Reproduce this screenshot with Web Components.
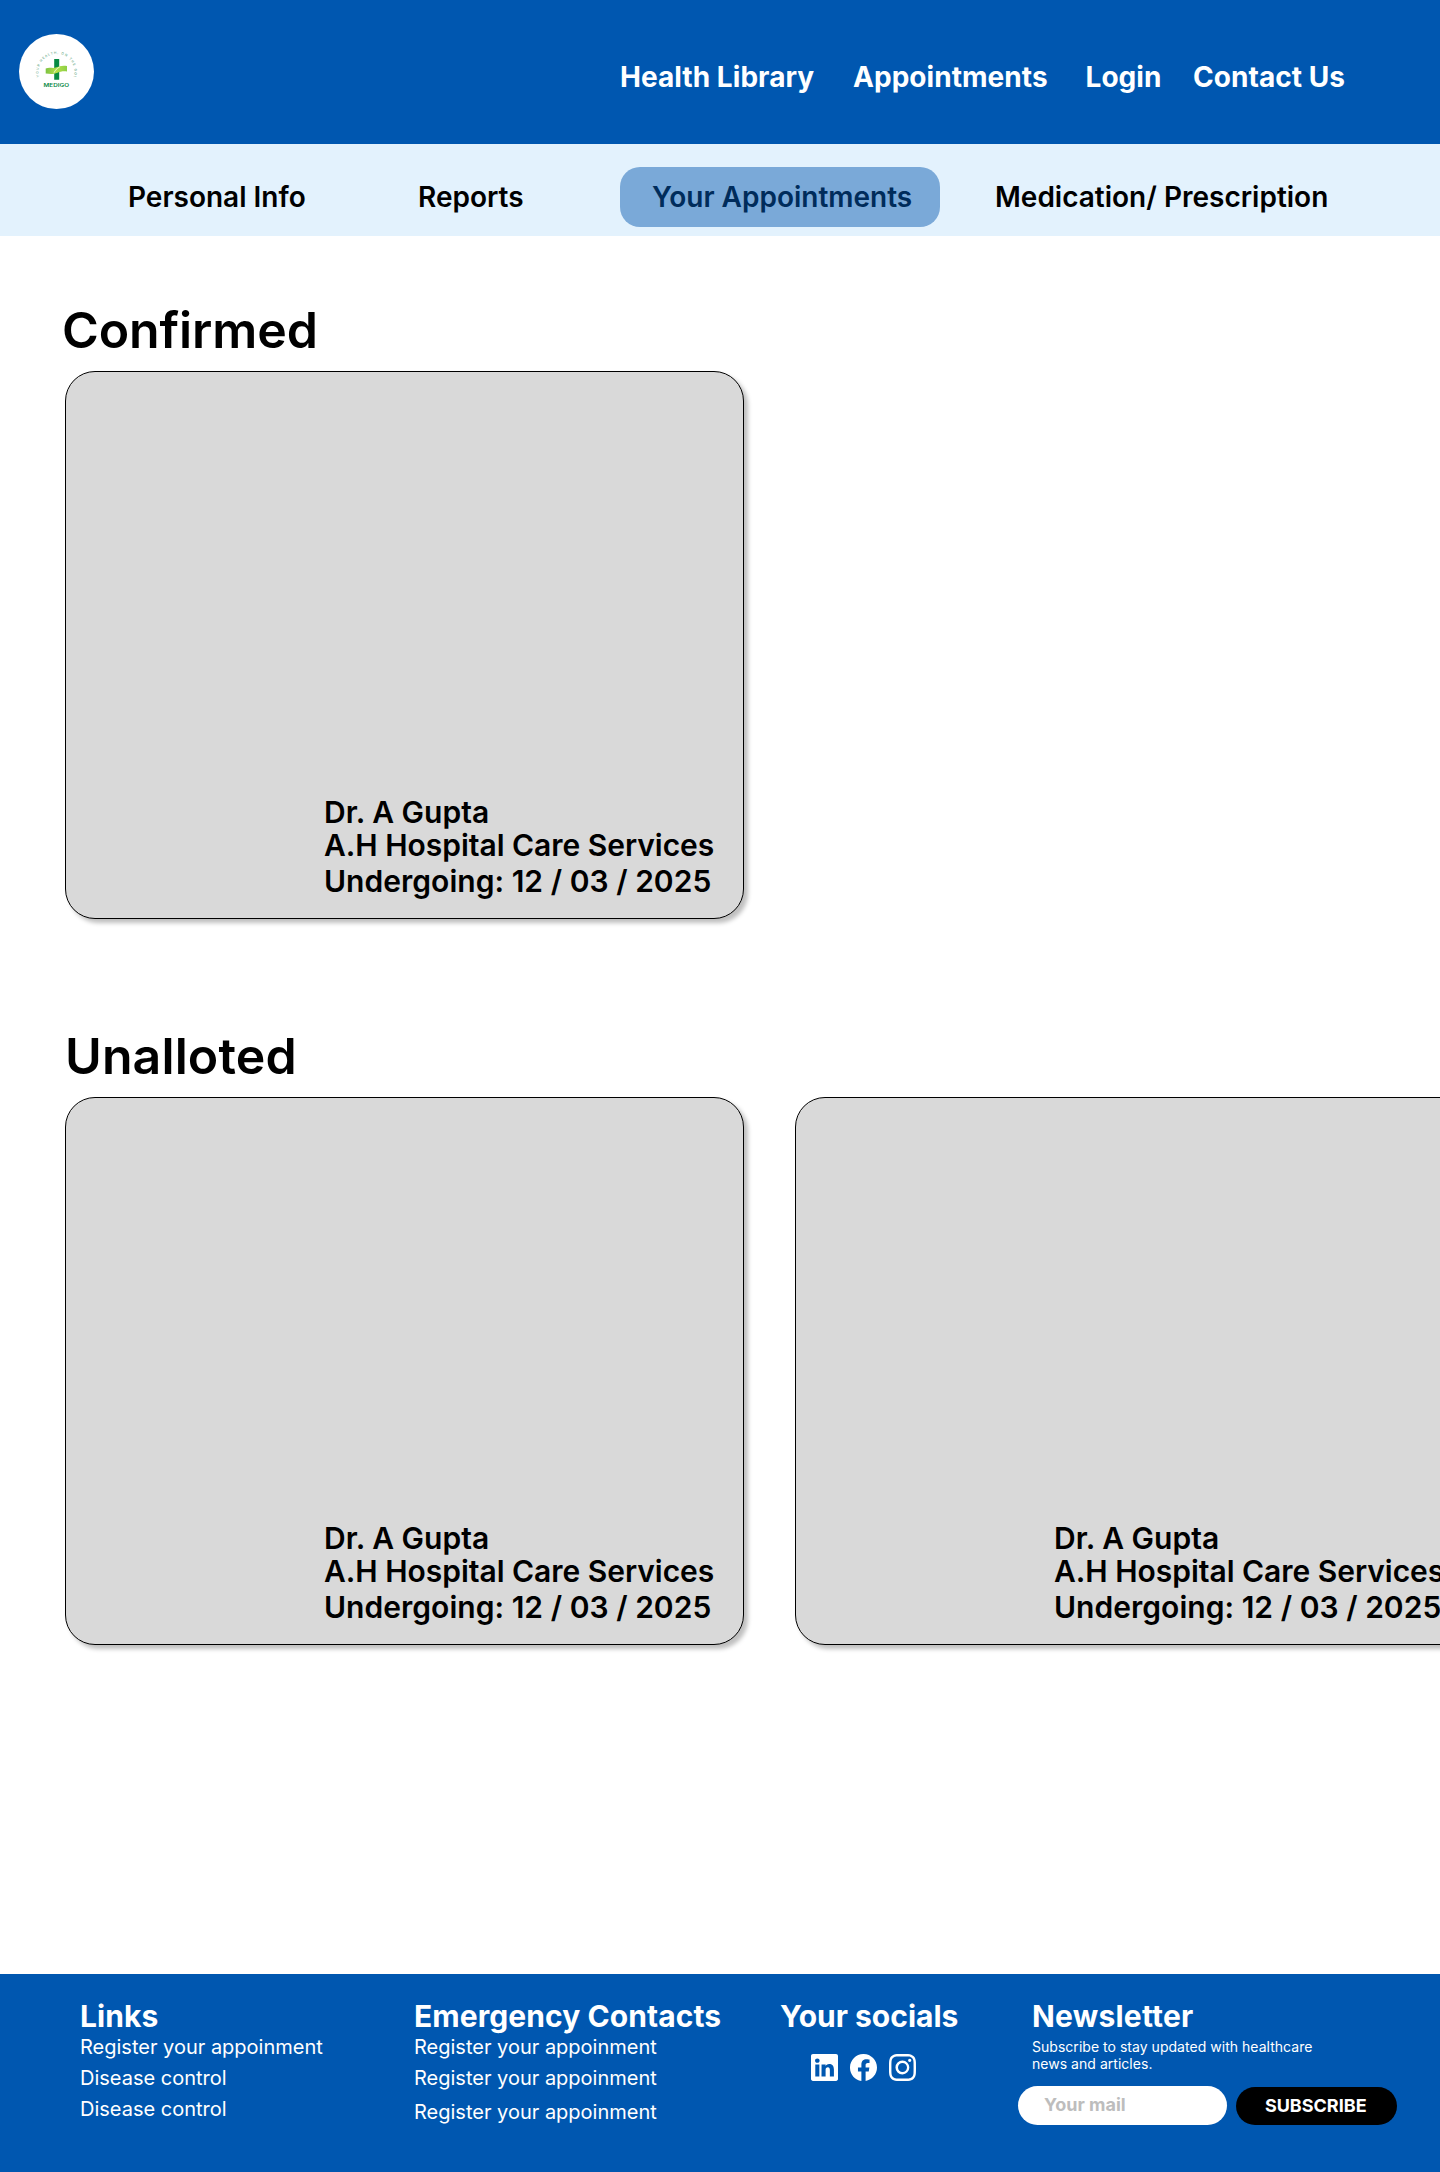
<!DOCTYPE html>
<html lang="en">
<head>
<meta charset="utf-8">
<title>Medigo – Your Appointments</title>
<style>
  body { margin: 0; background: #fff; font-family: Inter, "Liberation Sans", sans-serif; color: #000; }
</style>
</head>
<body>
<medigo-page></medigo-page>
<script>
const define = (name, html) => customElements.define(name, class extends HTMLElement {
  constructor() {
    super();
    const t = document.createElement('template');
    t.innerHTML = html;
    this.attachShadow({ mode: 'open' }).appendChild(t.content.cloneNode(true));
  }
});

define('medigo-logo', `
<style>
  :host { display: block; width: 75px; height: 75px; }
  svg { display: block; }
  text { font-family: Inter, sans-serif; }
</style>
<svg width="75" height="75" viewBox="0 0 75 75">
  <defs><path id="arc" d="M20.2 42.8 A18 18 0 1 1 54.8 42.8"/>
  <linearGradient id="lime" x1="0" x2="1"><stop offset="0" stop-color="#7cc242"/><stop offset=".5" stop-color="#b5e04a"/><stop offset="1" stop-color="#8ccf45"/></linearGradient></defs>
  <circle cx="37.5" cy="37.5" r="37.5" fill="#fff"/>
  <text font-size="3.300" font-weight="500" fill="#5fa885"><textPath href="#arc" textLength="66">YOUR HEALTH, ON THE GO!</textPath></text>
  <path d="M35.2 25h5v9h-5zM35.2 36.500h5v9.200h-5z" fill="#078a43"/>
  <path d="M26.7 34.400c4.300-1.600 6.800.300 10-.800 3.500-1.300 6.500-2.500 11.300-1.600v5.500c-4-.500-6.500.100-9.500 1.300-4.200 1.700-7.300 1.300-11.800.8z" fill="url(#lime)"/>
  <path d="M35 38.800c1.300-2.900 3-4.500 5.800-5.900" fill="none" stroke="#fff" stroke-width=".7"/>
  <text x="24.500" y="52.600" font-size="5.200" font-weight="600" fill="#0b8a48" textLength="25.500" lengthAdjust="spacingAndGlyphs">MEDIGO</text>
</svg>`);

define('top-bar', `
<style>
  :host { display: flex; align-items: flex-start; height: 144px; box-sizing: border-box; padding: 34px 0 0 19px; background: #0057b0; color: #fff; }
  nav { display: grid; grid-template-columns: 233px 232.500px 107.500px auto; margin: 26px 0 0 526px; font-size: 28px; line-height: 34px; font-weight: 700; letter-spacing: .05px; white-space: nowrap; }
</style>
<medigo-logo></medigo-logo>
<nav><slot></slot></nav>`);

define('tab-bar', `
<style>
  :host { display: grid; grid-template-columns: 290px 202px 320px auto; height: 92px; box-sizing: border-box; padding: 23px 0 0 128px; background: #e3f2fd; align-items: start; }
</style>
<slot></slot>`);

define('tab-item', `
<style>
  :host { display: flex; height: 60px; align-items: center; font-size: 28px; line-height: 34px; font-weight: 600; white-space: nowrap; }
  :host([active]) { width: 320px; box-sizing: border-box; padding-left: 32px; border-radius: 20px; background: #7aa9d8; color: #002c5b; }
  :host([last]) { padding-left: 55px; }
</style>
<slot></slot>`);

define('appointment-card', `
<style>
  :host { display: flex; flex-direction: column; justify-content: flex-end; flex: none; width: 679px; height: 548px; box-sizing: border-box; padding: 0 0 19px 258px; border: 1px solid #000; border-radius: 30px; background: #d9d9d9; box-shadow: 4px 4px 4px rgba(0,0,0,.25); font-size: 30px; line-height: 36px; font-weight: 600; white-space: nowrap; }
  div:nth-of-type(2) { margin-top: -3px; letter-spacing: -.03px; }
  div:nth-of-type(3) { letter-spacing: .03px; }
</style>
<div><slot name="doctor"></slot></div>
<div><slot name="place"></slot></div>
<div><slot name="date"></slot></div>`);

define('appointment-section', `
<style>
  :host { display: block; }
  h2 { margin: 0 0 11px; font-size: 50px; line-height: 60px; font-weight: 600; letter-spacing: .12px; }
  .row { display: flex; gap: 51px; }
</style>
<h2><slot name="title"></slot></h2>
<div class="row"><slot></slot></div>`);

define('footer-column', `
<style>
  :host { display: block; font-size: 20px; line-height: 24px; white-space: nowrap; }
  h3 { margin: 0 0 1px; font-size: 30px; line-height: 36px; font-weight: 700; letter-spacing: var(--title-spacing, .08px); }
</style>
<h3><slot name="title"></slot></h3>
<slot></slot>`);

define('footer-link', `
<style>:host { display: block; margin-bottom: 7px; }</style><slot></slot>`);

define('social-icons', `
<style>
  :host { display: flex; gap: 12px; padding: 19px 0 0 30.500px; }
  svg { width: 27px; height: 27px; fill: #fff; }
</style>
<svg viewBox="0 0 16 16"><path d="M0 1.146C0 .513.526 0 1.175 0h13.650C15.474 0 16 .513 16 1.146v13.708c0 .633-.526 1.146-1.175 1.146H1.175C.526 16 0 15.487 0 14.854V1.146zm4.943 12.248V6.169H2.542v7.225h2.401zm-1.200-8.212c.837 0 1.358-.554 1.358-1.248-.015-.709-.520-1.248-1.342-1.248-.822 0-1.359.540-1.359 1.248 0 .694.521 1.248 1.327 1.248h.016zm4.908 8.212V9.359c0-.216.016-.432.080-.586.173-.431.568-.878 1.232-.878.869 0 1.216.662 1.216 1.634v3.865h2.401V9.250c0-2.220-1.184-3.252-2.764-3.252-1.274 0-1.845.700-2.165 1.193V6.169h-2.400c.030.678 0 7.225 0 7.225h2.400z"/></svg>
<svg viewBox="0 0 16 16"><path d="M16 8.049c0-4.446-3.582-8.050-8-8.050C3.580 0-.002 3.603-.002 8.050c0 4.017 2.926 7.347 6.750 7.951v-5.625h-2.030V8.050H6.750V6.275c0-2.017 1.195-3.131 3.022-3.131.876 0 1.791.157 1.791.157v1.980h-1.009c-.993 0-1.303.621-1.303 1.258v1.510h2.218l-.354 2.326H9.250V16c3.824-.604 6.750-3.934 6.750-7.951z"/></svg>
<svg viewBox="0 0 16 16"><path d="M8 0C5.829 0 5.556.01 4.703.048 3.850.088 3.269.222 2.760.420a3.917 3.917 0 0 0-1.417.923A3.927 3.927 0 0 0 .420 2.760C.222 3.268.087 3.850.048 4.700.01 5.555 0 5.827 0 8.001c0 2.172.01 2.444.048 3.297.04.852.174 1.433.372 1.942.205.526.478.972.923 1.417.444.445.890.719 1.416.923.510.198 1.090.333 1.942.372C5.555 15.990 5.827 16 8 16s2.444-.01 3.298-.048c.851-.04 1.434-.174 1.943-.372a3.916 3.916 0 0 0 1.416-.923c.445-.445.718-.891.923-1.417.197-.509.332-1.090.372-1.942C15.990 10.445 16 10.173 16 8s-.01-2.445-.048-3.299c-.04-.851-.175-1.433-.372-1.941a3.926 3.926 0 0 0-.923-1.417A3.911 3.911 0 0 0 13.240.420c-.510-.198-1.092-.333-1.943-.372C10.443.01 10.172 0 7.998 0h.003zm-.717 1.442h.718c2.136 0 2.389.007 3.232.046.780.035 1.204.166 1.486.275.373.145.640.319.920.599.280.280.453.546.598.920.110.281.240.705.275 1.485.039.843.047 1.096.047 3.231s-.008 2.389-.047 3.232c-.035.780-.166 1.203-.275 1.485a2.470 2.470 0 0 1-.599.919c-.280.280-.546.453-.920.598-.280.110-.704.240-1.485.276-.843.038-1.096.047-3.232.047s-2.390-.009-3.233-.047c-.780-.036-1.203-.166-1.485-.276a2.478 2.478 0 0 1-.920-.598 2.480 2.480 0 0 1-.600-.920c-.109-.281-.240-.705-.275-1.485-.038-.843-.046-1.096-.046-3.233 0-2.136.008-2.388.046-3.231.036-.780.166-1.204.276-1.486.145-.373.319-.640.599-.920.280-.280.546-.453.920-.598.282-.110.705-.240 1.485-.276.738-.034 1.024-.044 2.515-.045v.002zm4.988 1.328a.960.960 0 1 0 0 1.920.960.960 0 0 0 0-1.920zm-4.270 1.122a4.109 4.109 0 1 0 0 8.217 4.109 4.109 0 0 0 0-8.217zm0 1.441a2.667 2.667 0 1 1 0 5.334 2.667 2.667 0 0 1 0-5.334z"/></svg>`);

define('newsletter-form', `
<style>
  :host { display: block; }
  p { margin: 0; padding-top: 3px; font-size: 14px; line-height: 17px; letter-spacing: .03px; }
  .row { display: flex; align-items: flex-end; gap: 9px; margin: 14px 0 0 -14px; font-size: 18px; line-height: 22px; font-weight: 700; }
  .field, .button { box-sizing: border-box; border-radius: 20px; }
  .field { width: 209px; height: 39px; padding: 7.500px 0 0 26px; background: #fff; color: #bdbdbd; }
  .button { width: 161px; height: 38px; padding: 8px 1.500px 0 0; background: #000; color: #fff; text-align: center; }
</style>
<p>Subscribe to stay updated with healthcare<br>news and articles.</p>
<div class="row"><div class="field">Your mail</div><div class="button">SUBSCRIBE</div></div>`);

define('page-footer', `
<style>
  :host { display: grid; grid-template-columns: 334px 366px 252px auto; height: 198px; box-sizing: border-box; padding: 24px 0 0 80px; background: #0057b0; color: #fff; }
  .social { --title-spacing: 0px; }
  .news { --title-spacing: .22px; }
</style>
<footer-column><span slot="title">Links</span>
  <footer-link>Register your appoinment</footer-link><footer-link>Disease control</footer-link><footer-link>Disease control</footer-link></footer-column>
<footer-column><span slot="title">Emergency Contacts</span>
  <footer-link>Register your appoinment</footer-link><footer-link style="margin-bottom:10px">Register your appoinment</footer-link><footer-link>Register your appoinment</footer-link></footer-column>
<footer-column class="social"><span slot="title">Your socials</span><social-icons></social-icons></footer-column>
<footer-column class="news"><span slot="title">Newsletter</span><newsletter-form></newsletter-form></footer-column>`);

define('medigo-page', `
<style>
  :host { display: flex; flex-direction: column; width: 1440px; height: 2172px; overflow: hidden; }
  main { flex: 1; display: flex; flex-direction: column; gap: 107px; padding: 64px 0 0 65px; }
  .confirmed span[slot=title] { margin-left: -3px; letter-spacing: -.12px; }
</style>
<top-bar><span>Health Library</span><span>Appointments</span><span>Login</span><span>Contact Us</span></top-bar>
<tab-bar><tab-item>Personal Info</tab-item><tab-item>Reports</tab-item><tab-item active>Your Appointments</tab-item><tab-item last>Medication/ Prescription</tab-item></tab-bar>
<main>
  <appointment-section class="confirmed"><span slot="title">Confirmed</span>
    <appointment-card><span slot="doctor">Dr. A Gupta</span><span slot="place">A.H Hospital Care Services</span><span slot="date">Undergoing: 12 / 03 / 2025</span></appointment-card>
  </appointment-section>
  <appointment-section><span slot="title">Unalloted</span>
    <appointment-card><span slot="doctor">Dr. A Gupta</span><span slot="place">A.H Hospital Care Services</span><span slot="date">Undergoing: 12 / 03 / 2025</span></appointment-card>
    <appointment-card><span slot="doctor">Dr. A Gupta</span><span slot="place">A.H Hospital Care Services</span><span slot="date">Undergoing: 12 / 03 / 2025</span></appointment-card>
  </appointment-section>
</main>
<page-footer></page-footer>`);
</script>
</body>
</html>
